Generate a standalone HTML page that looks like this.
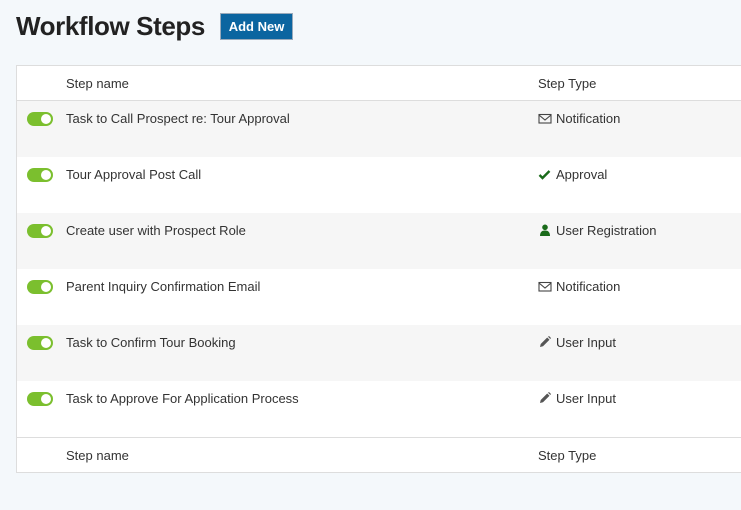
<!DOCTYPE html>
<html><head><style>
body{margin:0;width:741px;height:510px;background:#f4f8fb;font-family:"Liberation Sans",sans-serif;overflow:hidden;position:relative;color:#333}
h1{position:absolute;left:16px;top:11px;margin:0;font-size:26px;font-weight:bold;color:#222;letter-spacing:-0.4px}
.btn{position:absolute;left:220px;top:13px;width:73px;height:27px;background:#0b65a0;border:1px solid #9ab;color:#fff;font-weight:bold;font-size:13px;line-height:26px;text-align:center;box-sizing:border-box}
.tbl{position:absolute;left:16px;top:65px;width:730px;border:1px solid #ddd;background:#fff}
.hd{height:34px;position:relative;font-size:13px}
.hd.top{border-bottom:1px solid #ddd}
.hd.bot{border-top:1px solid #ddd}
.row{height:56px;position:relative;font-size:13px}
.row.g{background:#f6f6f6}
.n{position:absolute;left:49px;top:10px}
.hd .n,.hd .t{top:10px}
.t{position:absolute;left:521px;top:10px}
.tg{position:absolute;left:10px;top:11px;width:26px;height:14px;border-radius:7px;background:#7bbf2e}
.tg:after{content:"";position:absolute;right:2px;top:2px;width:10px;height:10px;border-radius:5px;background:#fff}
.ic{display:inline-block;width:14px;vertical-align:-1px;margin-right:4px}
</style></head><body>
<h1>Workflow Steps</h1>
<div class="btn">Add New</div>
<div class="tbl">
<div class="hd top"><span class="n">Step name</span><span class="t">Step Type</span></div>
<div class="row g"><div class="tg"></div><span class="n">Task to Call Prospect re: Tour Approval</span><span class="t"><svg class="ic" width="14" height="11" viewBox="0 0 14 11"><rect x="1" y="1.5" width="12" height="8.5" fill="none" stroke="#444" stroke-width="1.1"/><path d="M1 2l6 5 6-5" fill="none" stroke="#444" stroke-width="1.1"/></svg>Notification</span></div>
<div class="row"><div class="tg"></div><span class="n">Tour Approval Post Call</span><span class="t"><svg class="ic" width="14" height="11" viewBox="0 0 14 11"><path d="M1.5 6l3 3 7-7" fill="none" stroke="#1a6b1a" stroke-width="2.4"/></svg>Approval</span></div>
<div class="row g"><div class="tg"></div><span class="n">Create user with Prospect Role</span><span class="t"><svg class="ic" width="12" height="12" viewBox="0 0 12 12"><circle cx="6" cy="3.3" r="2.8" fill="#1a6b1a"/><path d="M1 12c0-4 2-5.5 5-5.5s5 1.5 5 5.5z" fill="#1a6b1a"/></svg>User Registration</span></div>
<div class="row"><div class="tg"></div><span class="n">Parent Inquiry Confirmation Email</span><span class="t"><svg class="ic" width="14" height="11" viewBox="0 0 14 11"><rect x="1" y="1.5" width="12" height="8.5" fill="none" stroke="#444" stroke-width="1.1"/><path d="M1 2l6 5 6-5" fill="none" stroke="#444" stroke-width="1.1"/></svg>Notification</span></div>
<div class="row g"><div class="tg"></div><span class="n">Task to Confirm Tour Booking</span><span class="t"><svg class="ic" width="12" height="12" viewBox="0 0 12 12"><path d="M1 11l.7-3 6.5-6.5 2.3 2.3-6.5 6.5z M9 .7l1-.7 2 2-.7 1z" fill="#555"/></svg>User Input</span></div>
<div class="row"><div class="tg"></div><span class="n">Task to Approve For Application Process</span><span class="t"><svg class="ic" width="12" height="12" viewBox="0 0 12 12"><path d="M1 11l.7-3 6.5-6.5 2.3 2.3-6.5 6.5z M9 .7l1-.7 2 2-.7 1z" fill="#555"/></svg>User Input</span></div>
<div class="hd bot"><span class="n">Step name</span><span class="t">Step Type</span></div>
</div>
</body></html>
